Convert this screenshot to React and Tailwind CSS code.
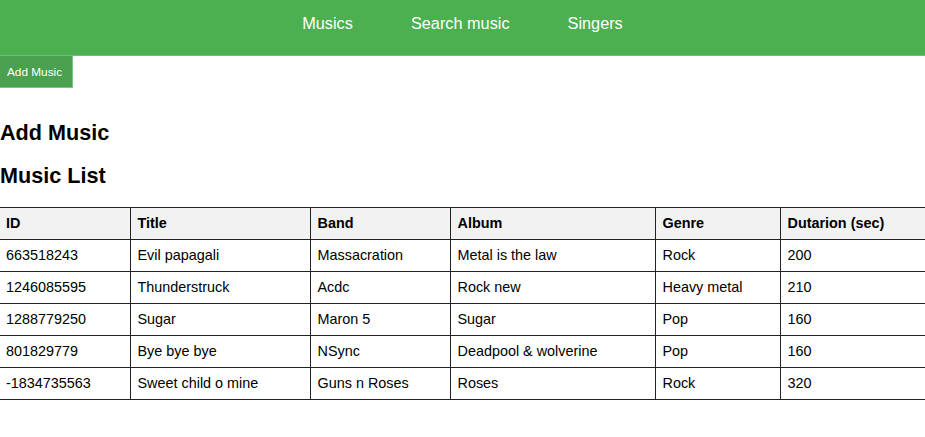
export default function App() {
  const rows = [
    ["663518243", "Evil papagali", "Massacration", "Metal is the law", "Rock", "200"],
    ["1246085595", "Thunderstruck", "Acdc", "Rock new", "Heavy metal", "210"],
    ["1288779250", "Sugar", "Maron 5", "Sugar", "Pop", "160"],
    ["801829779", "Bye bye bye", "NSync", "Deadpool & wolverine", "Pop", "160"],
    ["-1834735563", "Sweet child o mine", "Guns n Roses", "Roses", "Rock", "320"],
  ];
  const heads = ["ID", "Title", "Band", "Album", "Genre", "Dutarion (sec)"];
  const widths = ["w-[130px]", "w-[180px]", "w-[140px]", "w-[205px]", "w-[125px]", ""];
  return (
    <div className="min-h-[437px] bg-white text-black overflow-hidden" style={{ fontFamily: '"Liberation Sans", Arial, sans-serif' }}>
      <nav className="h-[56px] bg-[#4caf50] border-b border-[#6cc070] flex items-center justify-center gap-[58px] text-white text-[16.3px] pb-[8px]">
        <span>Musics</span>
        <span>Search music</span>
        <span>Singers</span>
      </nav>
      <button className="block h-[32px] w-[73px] bg-[#4aa04e] border-r border-b border-[#7cc47f] text-white text-[11.8px] text-left pl-[7px] leading-[30px]">
        Add Music
      </button>
      <h2 className="mt-[32px] text-[21.6px] font-bold leading-[26px]">Add Music</h2>
      <h2 className="mt-[17px] text-[21.6px] font-bold leading-[26px]">Music List</h2>
      <table className="mt-[18px] w-full table-fixed border-collapse text-[14.4px]">
        <colgroup>
          {widths.map((w, i) => (
            <col key={i} className={w} />
          ))}
        </colgroup>
        <thead>
          <tr className="h-[32px] bg-[#f2f2f2]">
            {heads.map((h, i) => (
              <th key={h} className={`text-left font-bold px-[7px] py-0 border-y border-[#222] ${i > 0 ? "border-l" : ""} ${i === 0 ? "pl-[6px]" : ""}`}>
                {h}
              </th>
            ))}
          </tr>
        </thead>
        <tbody>
          {rows.map((r, ri) => (
            <tr key={ri} className="h-[32px]">
              {r.map((c, i) => (
                <td key={i} className={`px-[7px] py-0 border-y border-[#222] ${i > 0 ? "border-l" : ""} ${i === 0 ? "pl-[6px]" : ""}`}>
                  {c}
                </td>
              ))}
            </tr>
          ))}
        </tbody>
      </table>
    </div>
  );
}
